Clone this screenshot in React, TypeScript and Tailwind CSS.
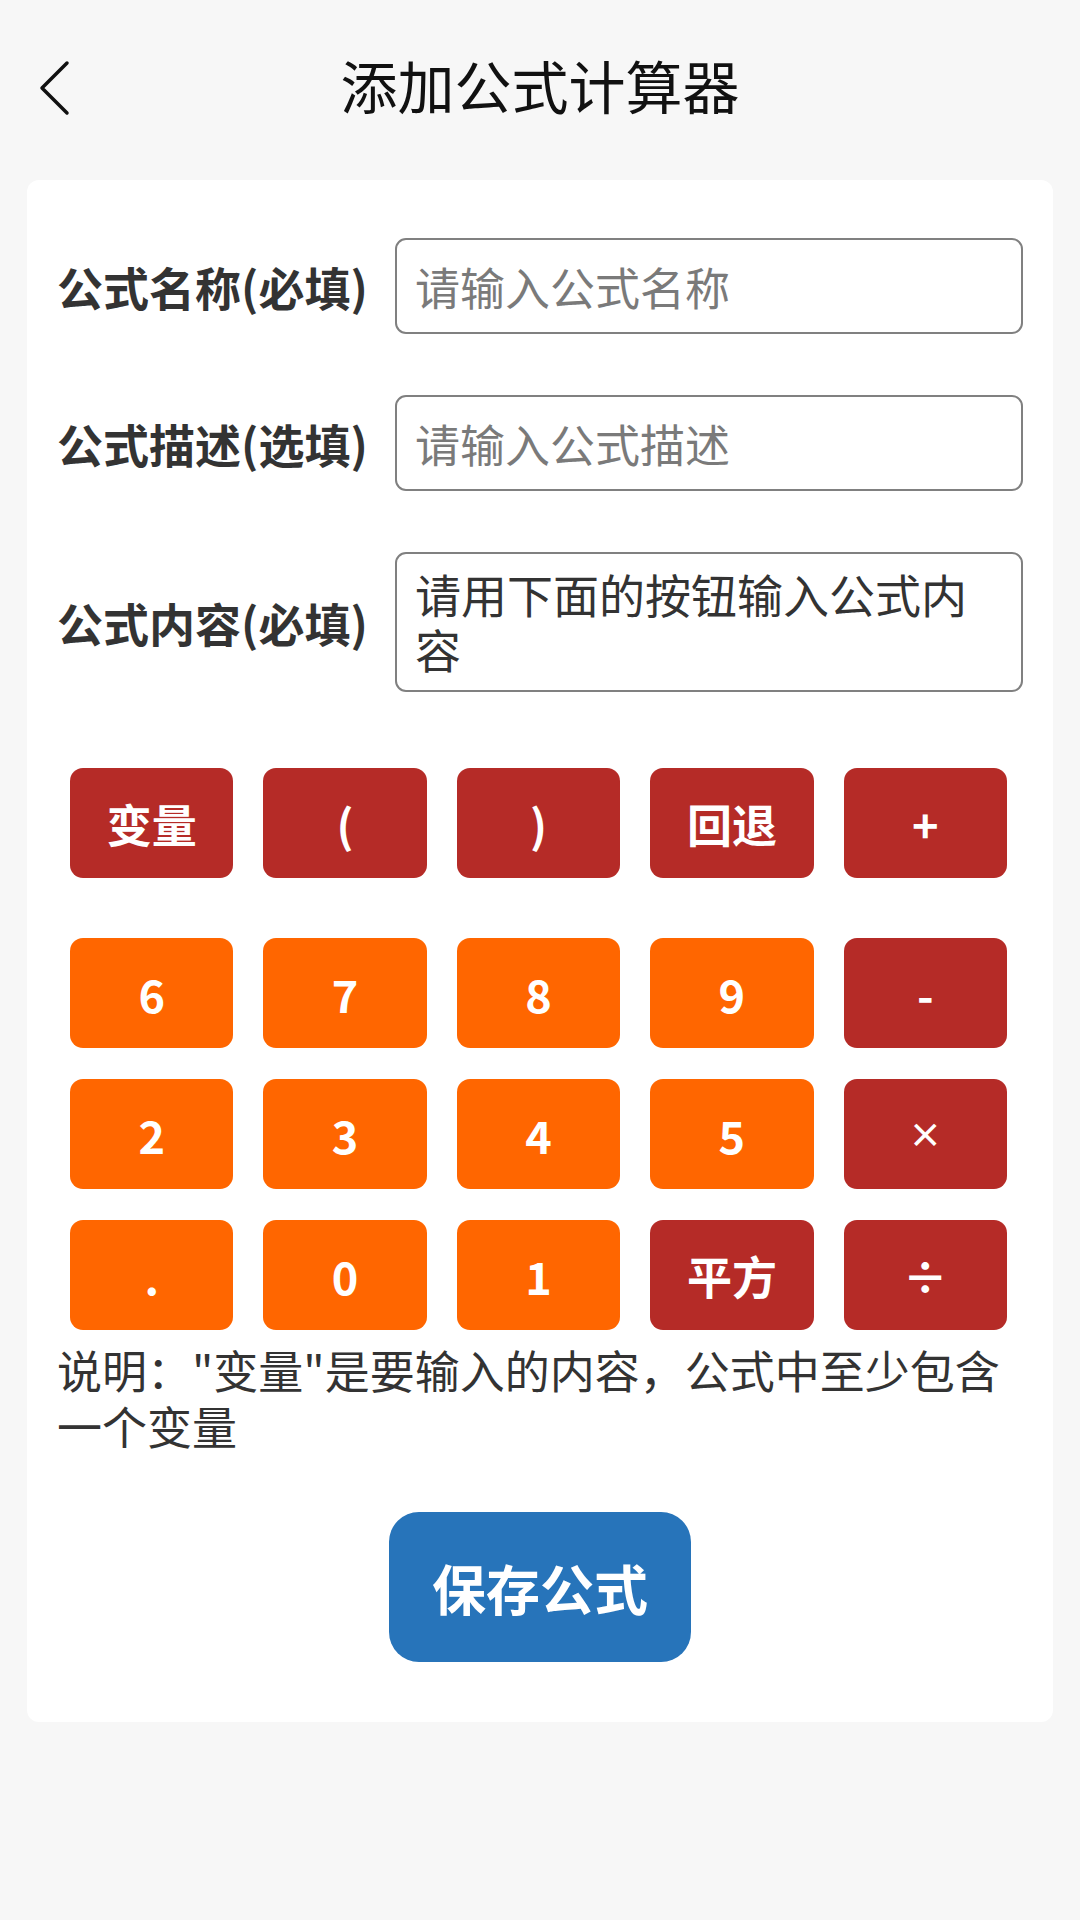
import React from 'react'

const font = { fontFamily: '"Noto Sans CJK SC", "Noto Sans", sans-serif' }

type Key = { label: string; tone: 'red' | 'orange'; small?: boolean }

const topRow: Key[] = [
  { label: '变量', tone: 'red' },
  { label: '(', tone: 'red' },
  { label: ')', tone: 'red' },
  { label: '回退', tone: 'red' },
  { label: '+', tone: 'red' },
]

const grid: Key[] = [
  { label: '6', tone: 'orange' },
  { label: '7', tone: 'orange' },
  { label: '8', tone: 'orange' },
  { label: '9', tone: 'orange' },
  { label: '-', tone: 'red' },
  { label: '2', tone: 'orange' },
  { label: '3', tone: 'orange' },
  { label: '4', tone: 'orange' },
  { label: '5', tone: 'orange' },
  { label: '×', tone: 'red', small: true },
  { label: '.', tone: 'orange' },
  { label: '0', tone: 'orange' },
  { label: '1', tone: 'orange' },
  { label: '平方', tone: 'red' },
  { label: '÷', tone: 'red' },
]

function KeyButton({ k }: { k: Key }) {
  return (
    <button
      className={
        'h-[110px] rounded-[13px] text-white font-bold leading-none flex items-center justify-center ' +
        (k.small ? 'text-[34px] ' : 'text-[45px] ') +
        (k.tone === 'red' ? 'bg-[#b52b27]' : 'bg-[#ff6600]')
      }
    >
      {k.label}
    </button>
  )
}

function Field({ label, placeholder }: { label: string; placeholder: string }) {
  return (
    <div className="flex items-center">
      <p className="w-[338px] shrink-0 text-[46px] font-bold text-[#333]">{label}</p>
      <div className="flex-1 h-[96px] border-2 border-[#808080] rounded-[11px] px-[18px] flex items-center">
        <span className="text-[45px] text-[#7a7a7a] leading-none">{placeholder}</span>
      </div>
    </div>
  )
}

export default function App() {
  return (
    <div className="w-[1080px] h-[1920px] bg-[#f7f7f7] flex flex-col" style={font}>
      <div className="relative h-[180px] flex items-start justify-center pt-[52px]">
        <svg className="absolute left-[36px] top-[60px]" width="36" height="56" viewBox="0 0 36 56">
          <path d="M31 3 L6 28 L31 53" fill="none" stroke="#111" strokeWidth="3.5" strokeLinecap="round" strokeLinejoin="round" />
        </svg>
        <h1 className="text-[57px] leading-[64px] text-[#111]">添加公式计算器</h1>
      </div>

      <div className="mx-[27px] bg-white rounded-[12px] px-[30px] pt-[58px] pb-[60px] flex flex-col">
        <div className="flex flex-col gap-[61px]">
          <Field label="公式名称(必填)" placeholder="请输入公式名称" />
          <Field label="公式描述(选填)" placeholder="请输入公式描述" />
          <div className="flex items-center">
            <p className="w-[338px] shrink-0 text-[46px] font-bold text-[#333]">公式内容(必填)</p>
            <div className="flex-1 h-[140px] border-2 border-[#808080] rounded-[11px] px-[18px] pt-[12px]">
              <p className="text-[46px] leading-[55px] text-[#333]">请用下面的按钮输入公式内容</p>
            </div>
          </div>
        </div>

        <div className="pl-[13px] pr-[16px] mt-[76px]">
          <div className="grid grid-cols-5 gap-x-[30px]">
            {topRow.map((k) => (
              <KeyButton key={k.label} k={k} />
            ))}
          </div>
          <div className="grid grid-cols-5 gap-x-[30px] gap-y-[31px] mt-[60px]">
            {grid.map((k) => (
              <KeyButton key={k.label} k={k} />
            ))}
          </div>
        </div>

        <p className="mt-[12px] text-[45px] leading-[56px] text-[#333]">
          说明："变量"是要输入的内容，公式中至少包含一个变量
        </p>

        <div className="flex justify-center mt-[58px]">
          <button className="w-[302px] h-[150px] rounded-[30px] bg-[#2774ba] text-white font-bold text-[54px]">
            保存公式
          </button>
        </div>
      </div>
    </div>
  )
}
